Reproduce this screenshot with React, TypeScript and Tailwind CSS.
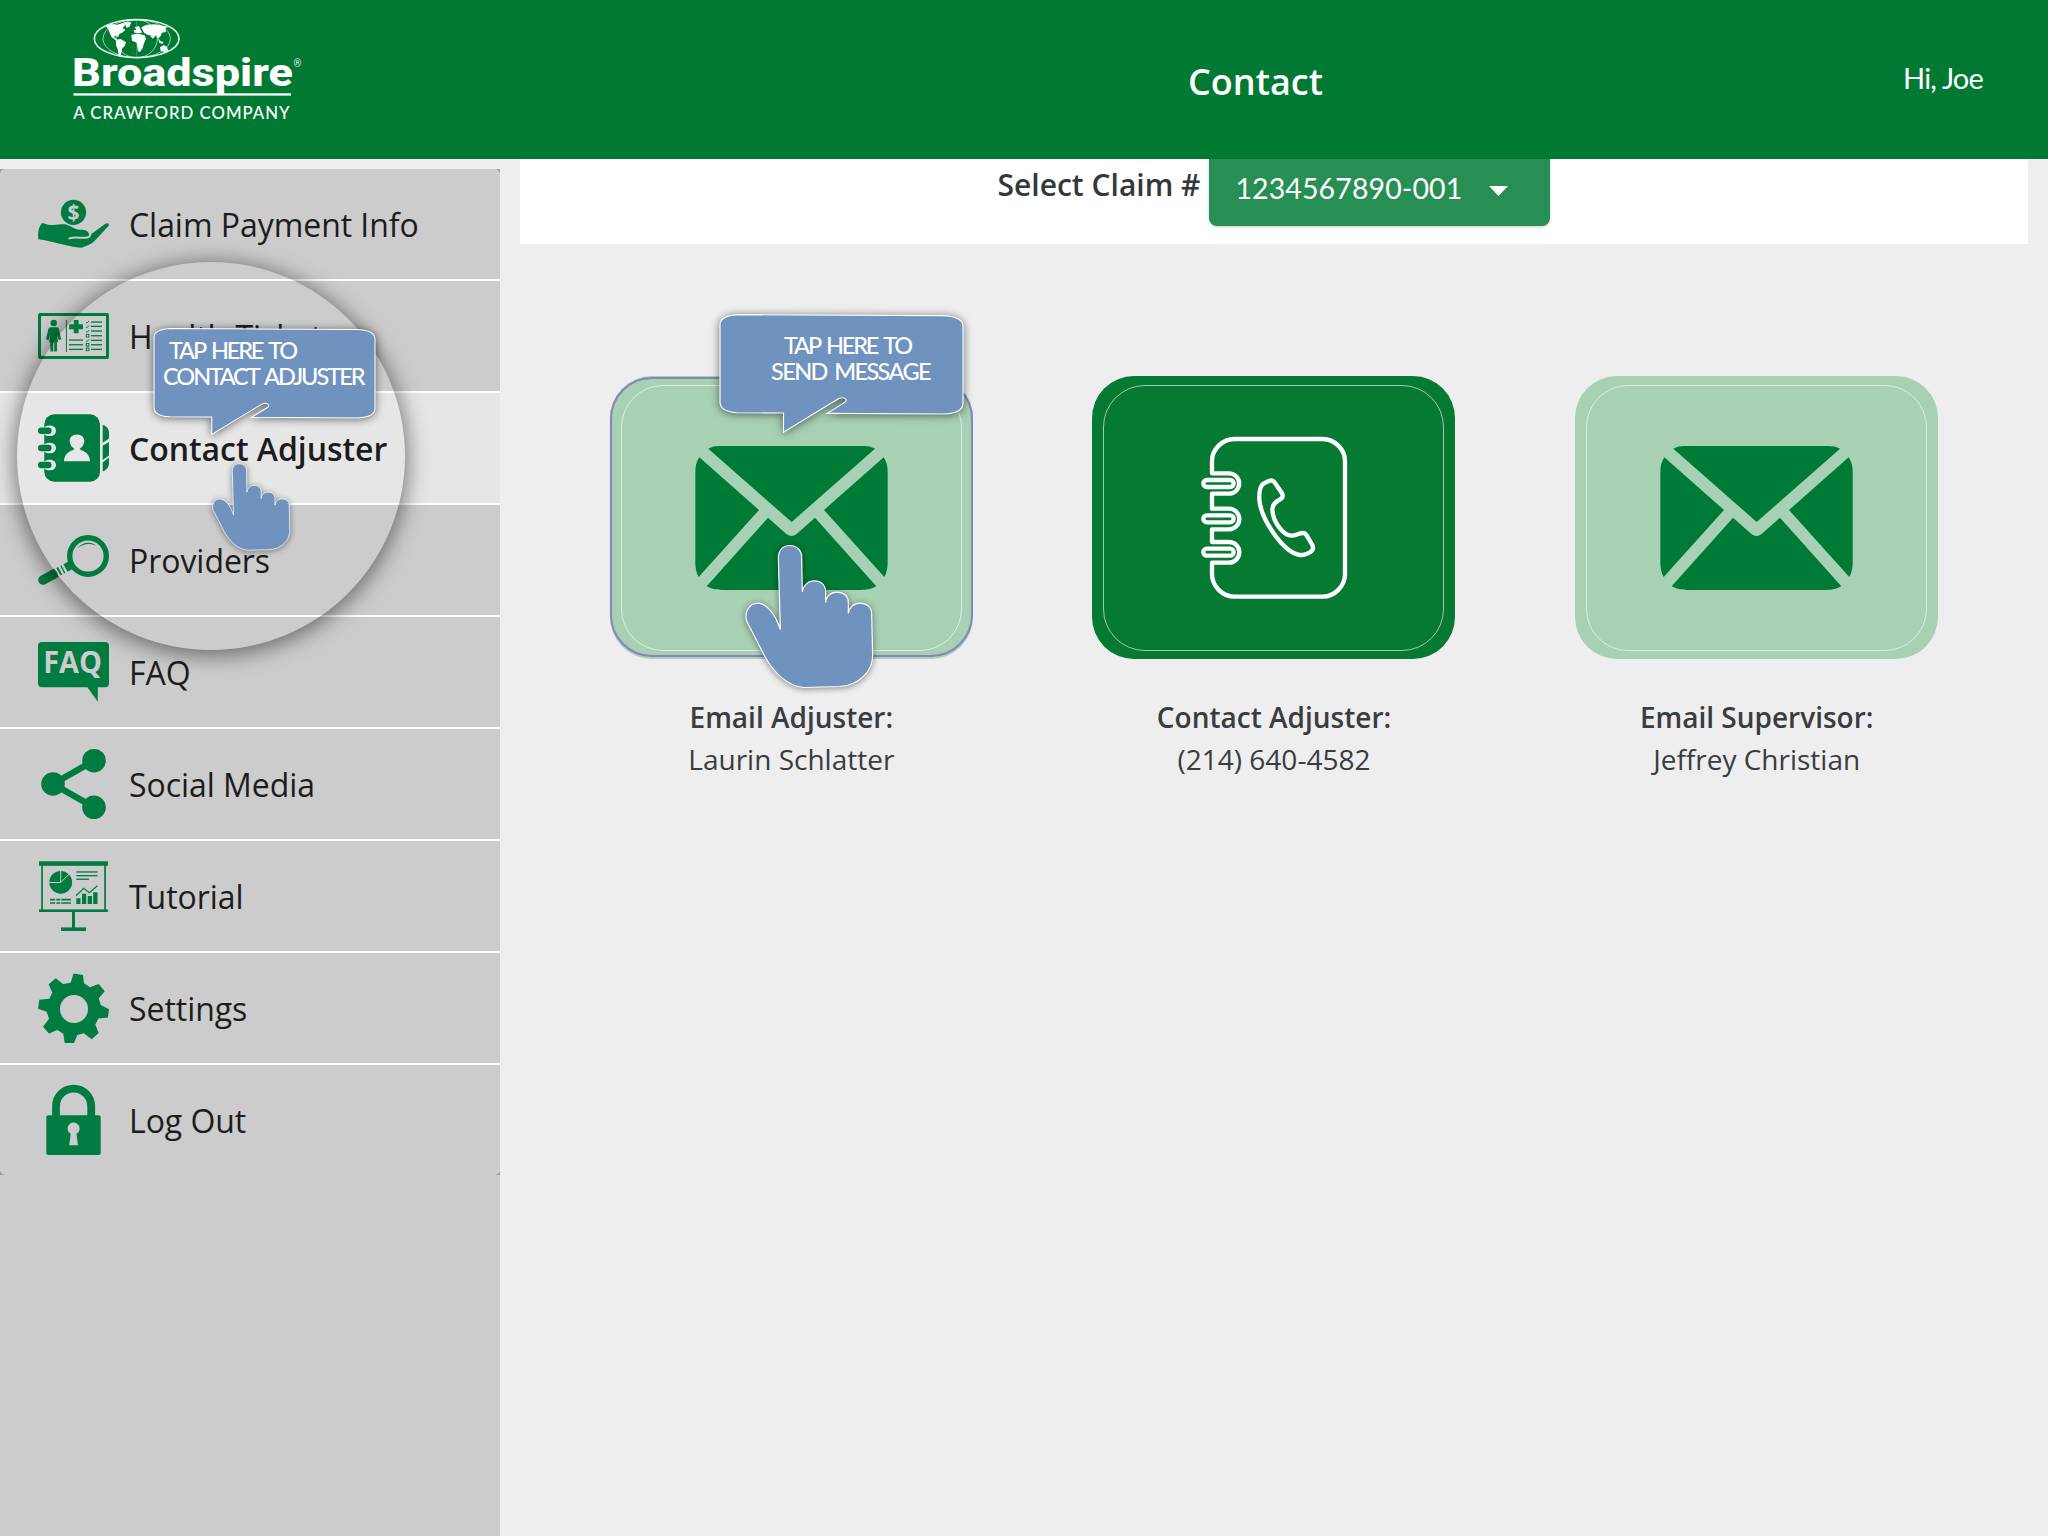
import type { ReactNode } from "react";

const GREEN = "#007b41";

function Logo() {
  return (
    <svg className="block h-[120px] w-[300px]" viewBox="0 0 300 120">
      <g transform="translate(20 0) scale(0.33333)">
        <g fill="none" stroke="#fff" strokeOpacity="0.85">
          <ellipse cx="290" cy="116" rx="127" ry="57" strokeWidth="5" />
          <ellipse cx="290" cy="116" rx="101" ry="57" strokeWidth="3" strokeOpacity="0.6" />
          <ellipse cx="290" cy="116" rx="62" ry="57" strokeWidth="3" strokeOpacity="0.6" />
          <path d="M290 60V172" strokeWidth="2" strokeOpacity="0.3" />
        </g>
        <g fill="#fff">
          <path d="M197 78L212 72L232 74L250 68L256 76L248 84L256 90L246 98L238 102L234 112L226 106L222 112L232 118L226 120L214 110L208 96L204 86Z" />
          <path d="M250 67L274 67L268 80L260 84L256 74Z" />
          <path d="M228 119L242 117L258 127L254 138L246 146L243 166L236 168L234 150L228 136Z" />
          <path d="M284 82L296 78L300 84L306 98L296 100L284 98L281 90L290 90Z" />
          <path d="M274 104L294 101L314 106L318 116L312 130L308 144L300 156L294 154L290 128L276 122Z" />
          <path d="M304 82L320 74L345 73L384 80L376 86L378 96L366 98L362 108L354 116L348 106L338 116L330 106L322 104L312 98Z" />
          <path d="M354 114L362 124L370 126L368 132L358 128Z" />
          <path d="M360 142L372 135L382 142L384 153L374 156L362 152Z" />
        </g>
      </g>
      <text x="52" y="86" fill="#fff" fontFamily="Roboto, sans-serif" fontWeight="800" fontSize="39.5" textLength="221" lengthAdjust="spacingAndGlyphs">
        Broadspire
      </text>
      <text x="273.5" y="66.8" fill="#fff" fillOpacity="0.9" fontFamily="Roboto, sans-serif" fontSize="10">
        ®
      </text>
      <rect x="53.5" y="93.3" width="217.5" height="2.3" fill="#fff" />
      <text x="53.2" y="118.7" fill="#fff" fontFamily="Lato, sans-serif" fontWeight="500" fontSize="16.8" textLength="216.5">
        A CRAWFORD COMPANY
      </text>
    </svg>
  );
}

function Icon({ children }: { children: ReactNode }) {
  return (
    <svg className="block size-[72px] shrink-0 overflow-visible" viewBox="0 0 72 72" fill={GREEN}>
      {children}
    </svg>
  );
}

const HandCoinIcon = () => (
  <Icon>
    <circle cx="35.5" cy="24.3" r="12.6" />
    <text x="35.5" y="31.8" textAnchor="middle" fill="#ccc" fontFamily="Open Sans, sans-serif" fontWeight="700" fontSize="21">
      $
    </text>
    <path d="M4.2 35C9 36.5 11 37.4 16 37C22 36.2 27 35.6 32 38C36 40.5 39 42 43 41.8C49 41.8 51 44 51.3 47.5L67 36C69.5 34.3 72 35.5 70.5 38L56 53.5C52 57 48 58 43.5 59.8C29 58.5 15 53 0.3 51.2C-0.3 45 0.5 38.5 4.2 35Z" />
    <path d="M31.3 50.4C38 48.3 43 50.6 49 49.6C53 48.7 53.3 44.8 50.5 42.6" fill="none" stroke="#ccc" strokeWidth="2" strokeLinecap="round" />
  </Icon>
);

const HealthCardIcon = () => (
  <Icon>
    <rect x="1.5" y="14.5" width="68" height="43" rx="0.6" fill="none" stroke={GREEN} strokeWidth="3" />
    <circle cx="15.7" cy="23" r="3.2" />
    <path d="M12 27.3H19.5C20.8 27.6 21 29 21.3 30.5L23.2 39.2L20.8 40.2L18.8 34L20.2 42H19V51.5H16.2V42.5H15.3V51.5H12.3V42H11L12.5 34L10.5 40.2L8 39.2L10 30.5C10.4 28.8 10.8 27.6 12 27.3Z" />
    <rect x="27.9" y="20" width="1" height="32" />
    <path d="M35.7 20H40.6V24.2H45V29.2H40.6V33.3H35.7V29.2H31.2V24.2H35.7Z" />
    {[40, 44.7, 49.3].map((y) => (
      <rect key={y} x="31" y={y - 0.6} width="14" height="1.3" />
    ))}
    {[22, 26.3, 31, 35.7, 40.3, 44.7, 49.3].map((y) => (
      <rect key={y} x="53" y={y - 0.6} width="11" height="1.3" />
    ))}
    <g fill="none" stroke={GREEN} strokeWidth="1">
      <path d="M48 22.4L49 23.2L51 21M48 26.9L49 27.7L51 25.5M48 31.4L49 32.2L51 30M48 40.8L49 41.6L51 39.4" />
      <rect x="48.3" y="34.3" width="2.6" height="2.8" />
      <rect x="48.3" y="43.5" width="2.6" height="2.6" />
      <rect x="48.3" y="48" width="2.6" height="2.6" />
    </g>
  </Icon>
);

const AddressBookIcon = () => (
  <Icon>
    <rect x="6.3" y="2.2" width="55.7" height="67.6" rx="10" />
    <g fill="#e6e6e6">
      {[18.8, 36, 53].map((y) => (
        <rect key={y} x="5" y={y - 5.3} width="13" height="10.6" rx="5.3" />
      ))}
      <path d="M26 49.2C26 43.5 30 39.5 34.8 38.2L36.3 36.8C33.5 35 32.2 32.5 31.8 30C31 25.5 34.5 22.4 39 22.4C43.5 22.4 47 25.5 46.2 30C45.8 32.5 44.5 35 41.7 36.8L43.2 38.2C48 39.5 52 43.5 52 49.2Z" />
    </g>
    {[18.8, 36, 53].map((y) => (
      <rect key={y} x="0" y={y - 3.2} width="13.6" height="6.4" rx="3.2" />
    ))}
    <path d="M64.7 13C69.5 14 71 18 71 21V26.5L64.7 30.8V13Z" />
    <path d="M64.7 33.8L71 30V43.6L64.7 48Z" />
    <path d="M64.7 50.5L71 45.5V51C71 54 69.5 57.5 64.7 59.5Z" />
  </Icon>
);

const MagnifierIcon = () => (
  <Icon>
    <circle cx="50" cy="32" r="18.3" fill="none" stroke={GREEN} strokeWidth="5.4" />
    <path d="M39.3 24.6C44 18 53 17 58 21.6C51.5 18.8 45 19.5 39.3 24.6Z" />
    <g fill="none" stroke={GREEN}>
      <path d="M5 56L15 50.6" strokeWidth="9.5" strokeLinecap="round" />
      <path d="M14 51.2L18.6 48.7" strokeWidth="9.5" />
      <path d="M20.4 47.8L22.2 46.8M24.2 45.7L25.4 45.1M27.5 43.9L33 40.9" strokeWidth="8.6" />
    </g>
  </Icon>
);

const FaqIcon = () => (
  <Icon>
    <path d="M4 6H67A4 4 0 0 1 71 10V47.3A4 4 0 0 1 67 51.3H59.8V65.7L49.4 51.3H4A4 4 0 0 1 0 47.3V10A4 4 0 0 1 4 6Z" />
    <text x="5.3" y="37.3" fill="#ccc" fontFamily="Open Sans, sans-serif" fontWeight="700" fontSize="30" textLength="58.5" lengthAdjust="spacingAndGlyphs">
      FAQ
    </text>
  </Icon>
);

const ShareIcon = () => (
  <Icon>
    <path d="M56 12.7L15 36L56 59.3" fill="none" stroke={GREEN} strokeWidth="6.4" />
    <circle cx="15" cy="36" r="11.8" />
    <circle cx="56" cy="12.7" r="11.8" />
    <circle cx="56" cy="59.3" r="11.8" />
  </Icon>
);

const PresentationIcon = () => (
  <Icon>
    <rect x="1" y="1.3" width="69" height="4.5" />
    <rect x="3.2" y="5" width="1.7" height="45" />
    <rect x="66.2" y="5" width="1.7" height="45" />
    <rect x="1" y="49.4" width="69" height="2.6" />
    <rect x="34" y="51" width="3" height="17" />
    <rect x="23" y="67.4" width="25" height="3.6" />
    <circle cx="22.7" cy="22.3" r="11.4" />
    <path d="M22.7 10V22.5H11M22.7 22.5L31.5 13.8" fill="none" stroke="#ccc" strokeWidth="1" />
    <rect x="38.3" y="11.3" width="21.2" height="1.3" />
    <rect x="38.3" y="15" width="21.2" height="1.3" />
    <rect x="38.3" y="18.6" width="12.8" height="1.3" />
    <path d="M38 35.8L45.7 28.4L51.3 32.8L59.4 25.8" fill="none" stroke={GREEN} strokeWidth="1.2" />
    <path d="M38.3 38.3H42.5V44H38.3ZM44 33.8H48.2V44H44ZM49.7 36H54V44H49.7ZM55.2 32.2H59.5V44H55.2Z" />
    <path d="M12 38.8H17.2V40.4H12ZM18.3 38.8H22.3V40.4H18.3ZM23.3 38.8H33V40.4H23.3ZM12 42.2H17.2V43.8H12ZM18.3 42.2H22.3V43.8H18.3ZM23.3 42.2H33V43.8H23.3Z" />
  </Icon>
);

const GearIcon = () => (
  <Icon>
    <path
      fillRule="evenodd"
      d="M35.5 1.5L45 3L46 11.3L52 15.3L60.7 12L66.7 19.3L60.8 26.3L62.7 33L71 37.3L70 45.6L60.3 46.5L57.3 52.5L60.7 61L53.7 67.3L45.7 61.3L39.3 63L36 71H26.7L25.3 61.7L19.3 58L11 61.5L5 54.7L11 46.7L8.7 39.7L0 36.7L1.3 27.7L11.3 26.7L14.3 20.7L10.7 12.3L17.7 6.3L25 12L32.7 10.7ZM36 23A14 14 0 1 0 36 51A14 14 0 1 0 36 23Z"
    />
  </Icon>
);

const LockIcon = () => (
  <Icon>
    <rect x="8.3" y="31.3" width="54.4" height="39.7" rx="2" />
    <path d="M18 33V22.3A17.6 17.6 0 0 1 53.2 22.3V33" fill="none" stroke={GREEN} strokeWidth="7.8" />
    <path fill="#ccc" d="M32.7 50A6.1 6.1 0 1 1 38.5 50L40 61.3H31.2Z" />
  </Icon>
);

const menu = [
  { label: "Claim Payment Info", icon: <HandCoinIcon />, tone: "bg-[#ccc] rounded-t-[5px]" },
  { label: "Health Tickets", icon: <HealthCardIcon />, tone: "bg-[#ccc]" },
  { label: "Contact Adjuster", icon: <AddressBookIcon />, tone: "bg-[#e6e6e6] font-semibold" },
  { label: "Providers", icon: <MagnifierIcon />, tone: "bg-[#ccc]" },
  { label: "FAQ", icon: <FaqIcon />, tone: "bg-[#ccc]" },
  { label: "Social Media", icon: <ShareIcon />, tone: "bg-[#ccc]" },
  { label: "Tutorial", icon: <PresentationIcon />, tone: "bg-[#ccc]" },
  { label: "Settings", icon: <GearIcon />, tone: "bg-[#ccc]" },
  { label: "Log Out", icon: <LockIcon />, tone: "bg-[#ccc] rounded-b-[5px]" },
];

function Bubble({ className, children }: { className: string; children: ReactNode }) {
  return (
    <div className={`absolute ${className}`}>
      <svg
        className="absolute inset-0 h-full w-full overflow-visible drop-shadow-[0_1px_4px_rgba(0,0,0,0.55)]"
        viewBox="0 0 727 358"
        preserveAspectRatio="none"
      >
        <path
          d="M0 32C0 12 25 3 60 2L665 5C700 6 727 15 727 38V268C727 290 705 300 670 301L321 299L373 266C380 260 378 252 365 252C359 252 354 255 348 259L190 356V298L50 297C20 295 0 285 0 265Z"
          fill="#7092bf"
          stroke="#fff"
          strokeWidth="3.4"
        />
      </svg>
      <div className="relative flex flex-col font-['Lato',sans-serif] text-[23.5px] leading-[26px] font-medium whitespace-nowrap text-white">{children}</div>
    </div>
  );
}

function Hand({ className }: { className: string }) {
  return (
    <svg className={`absolute overflow-visible drop-shadow-[0_1px_3px_rgba(0,0,0,0.45)] ${className}`} viewBox="0 0 384 428">
      <path
        d="M100 38C100 16 114 1 134 1C155 1 170 15 170 36L172 140C174 122 188 107 208 107C228 107 242 120 242 140V172C243 154 256 141 276 141C297 141 310 153 310 172V205C312 187 326 174 345 174C366 174 380 187 380 205L383 330C383 380 340 420 285 424L175 427C125 422 85 380 60 335L7 232C-5 208 10 174 38 174C66 174 92 210 106 253Z"
        fill="#7092bf"
        stroke="#fff"
        strokeWidth="3.6"
      />
    </svg>
  );
}

const Envelope = () => (
  <svg className="h-[144px] w-[193px] overflow-visible" viewBox="0 0 577 432" fill="#007a37">
    <path d="M39 8C50 2 60 0 78 0H500C518 0 528 2 539 8L289 228Z" />
    <path d="M12 34L191 192L10 393C3 380 0 365 0 350V80C0 62 3 47 12 34Z" />
    <path d="M565 34L386 192L567 393C574 380 577 365 577 350V80C577 62 574 47 565 34Z" />
    <path d="M34 421L218 215L274 265Q289 275 303 265L359 215L543 421C530 428 518 432 495 432H82C60 432 48 428 34 421Z" />
  </svg>
);

const PhoneBook = () => (
  <svg className="h-[163px] w-[146px] overflow-visible" viewBox="0 0 438 489" fill="none" stroke="#fff" strokeWidth="13" strokeLinejoin="round">
    <path d="M33 112V75C33 40 64 9 100 9H365C401 9 432 40 432 75V415C432 450 401 482 365 482H100C64 482 33 450 33 415V380H84A31 31 0 0 0 84 318H33V280H84A31 31 0 0 0 84 218H33V173H84A30.5 30.5 0 0 0 84 112Z" />
    <rect x="7" y="132" width="91" height="21" rx="10.5" />
    <rect x="7" y="238" width="91" height="21" rx="10.5" />
    <rect x="7" y="338" width="91" height="21" rx="10.5" />
    <path d="M185 145C197 136 204 134 210 133C216 133 219 136 222 141L243 172C247 180 245 185 239 189C220 199 214 207 214 220C216 262 250 300 273 299C292 298 298 287 311 292C315 295 318 299 321 305L334 327C338 335 336 342 328 348C315 356 306 358 298 357C245 350 178 245 175 190C174 167 177 153 185 145Z" />
  </svg>
);

const cards = [
  { title: "Email Adjuster:", detail: "Laurin Schlatter", icon: <Envelope />, tone: "bg-[#a8d0b3]", selected: true },
  { title: "Contact Adjuster:", detail: "(214) 640-4582", icon: <PhoneBook />, tone: "bg-[#067933]" },
  { title: "Email Supervisor:", detail: "Jeffrey Christian", icon: <Envelope />, tone: "bg-[#a8d0b3]" },
];

export default function App() {
  return (
    <div className="relative flex h-[1536px] w-[2048px] flex-col overflow-hidden bg-[#eee] font-['Open_Sans',sans-serif]">
      <header className="flex h-[159px] shrink-0 bg-[#007a33] text-white">
        <div className="w-[520px] pl-5">
          <Logo />
        </div>
        <h1 className="flex-1 pt-[57px] pr-[57px] text-center text-[36px] leading-[50px] font-semibold">Contact</h1>
        <div className="absolute top-[57px] right-[65px] font-['Lato',sans-serif] text-[29px] leading-[42px] tracking-[-0.8px]">Hi, Joe</div>
      </header>

      <div className="flex min-h-0 flex-1">
        <aside className="mt-[10px] w-[500px] shrink-0 bg-[#ccc]">
          <nav className="flex flex-col divide-y-2 divide-white bg-[#999]">
            {menu.map(({ label, icon, tone }) => (
              <div key={label}>
                <div className={`flex h-[110px] items-center gap-[19px] pl-[38px] text-[32px] tracking-[-0.05px] text-[#1c1c1c] ${tone}`}>
                  {icon}
                  <span className="pt-[2px]">{label}</span>
                </div>
              </div>
            ))}
          </nav>
        </aside>

        <main className="flex-1 px-5">
          <div className="flex h-[85px] justify-center bg-white">
            <div className="flex gap-[9px] text-[#34373c]">
              <label className="pt-[5px] text-[30px] leading-[42px] font-semibold whitespace-nowrap">Select Claim #</label>
              <div className="flex h-[67px] w-[341px] rounded-b-lg bg-[#278f54] pl-[26px] font-['Lato',sans-serif] text-[28.5px] text-white shadow-[0_1px_3px_rgba(0,0,0,0.2)]">
                <span className="w-[254px] pt-[8px] leading-[42px] tracking-[0.1px]">1234567890-001</span>
                <svg className="mt-[27px] h-[10px] w-[19px]" viewBox="0 0 19 10" fill="#fff">
                  <path d="M0 0H19L9.5 10Z" />
                </svg>
              </div>
            </div>
          </div>

          <div className="grid grid-cols-3 px-[30px] pt-[132px]">
            {cards.map(({ title, detail, icon, tone, selected }) => (
              <div key={title} className="flex flex-col items-center text-[28px] leading-[42px] text-[#393c40]">
                <div className={`relative flex h-[283px] w-[363px] items-center justify-center rounded-[42px] ${tone}`}>
                  <div className="absolute inset-x-[11px] top-[9px] bottom-[8px] rounded-[42px] border border-white/60" />
                  {selected && <div className="absolute inset-x-0 top-px bottom-[2px] rounded-[42px] border-2 border-[#8884bd]" />}
                  {icon}
                </div>
                <div className="mt-[37px] font-semibold">{title}</div>
                <div>{detail}</div>
              </div>
            ))}
          </div>
        </main>
      </div>

      <div className="absolute top-[262px] left-[17px] size-[388px] rounded-full shadow-[0_3px_22px_2px_rgba(0,0,0,0.5)]" />
      <Bubble className="top-[328px] left-[154px] h-[107px] w-[221px]">
        <span className="mt-[9px] ml-[15px] tracking-[-2.2px] [word-spacing:3px]">TAP HERE TO</span>
        <span className="ml-[9px] tracking-[-2px] [word-spacing:3px]">CONTACT ADJUSTER</span>
      </Bubble>
      <Hand className="top-[463px] left-[212px] h-[88px] w-[78px]" />
      <Bubble className="top-[314px] left-[720px] h-[119px] w-[243px]">
        <span className="mt-[18px] ml-[64px] tracking-[-2.2px] [word-spacing:3px]">TAP HERE TO</span>
        <span className="ml-[51px] tracking-[-1.6px] [word-spacing:3px]">SEND MESSAGE</span>
      </Bubble>
      <Hand className="top-[545px] left-[745px] h-[143px] w-[128px]" />
    </div>
  );
}
